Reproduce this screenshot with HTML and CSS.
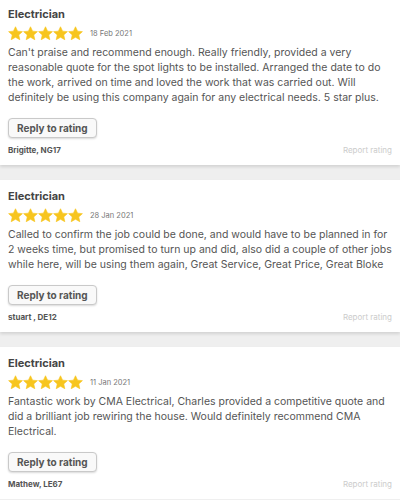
FILE: index.html
```html
<!DOCTYPE html>
<html>
	<head>
		<meta charset="UTF-8">
		<title>Ratings</title>
		<link rel="stylesheet" href="styles.css">
	</head>
	<body>
		<svg width="0" height="0" class="defs">
			<defs>
				<symbol id="star" viewBox="0 0 24 24">
					<path d="M12 1.2l3.3 7 7.7.8-5.8 5.2 1.7 7.7L12 18l-6.9 3.9 1.7-7.7L1 9l7.7-.8z" stroke-linejoin="round"/>
				</symbol>
			</defs>
		</svg>
		<div class="list">
			<div class="card">
				<h3 class="trade">Electrician</h3>
				<div class="rating">
					<span class="stars">
						<svg><use href="#star"/></svg><svg><use href="#star"/></svg><svg><use href="#star"/></svg><svg><use href="#star"/></svg><svg><use href="#star"/></svg>
					</span>
					<span class="date">18 Feb 2021</span>
				</div>
				<p class="text">Can't praise and recommend enough. Really friendly, provided a very reasonable quote for the spot lights to be installed. Arranged the date to do the work, arrived on time and loved the work that was carried out. Will definitely be using this company again for any electrical needs. 5 star plus.</p>
				<a href="javascript:;" class="reply">Reply to rating</a>
				<div class="foot">
					<span class="name">Brigitte, NG17</span>
					<a href="javascript:;" class="report">Report rating</a>
				</div>
			</div>
			<div class="card">
				<h3 class="trade">Electrician</h3>
				<div class="rating">
					<span class="stars">
						<svg><use href="#star"/></svg><svg><use href="#star"/></svg><svg><use href="#star"/></svg><svg><use href="#star"/></svg><svg><use href="#star"/></svg>
					</span>
					<span class="date">28 Jan 2021</span>
				</div>
				<p class="text">Called to confirm the job could be done, and would have to be planned in for 2 weeks time, but promised to turn up and did, also did a couple of other jobs while here, will be using them again, Great Service, Great Price, Great Bloke</p>
				<a href="javascript:;" class="reply">Reply to rating</a>
				<div class="foot">
					<span class="name">stuart , DE12</span>
					<a href="javascript:;" class="report">Report rating</a>
				</div>
			</div>
			<div class="card">
				<h3 class="trade">Electrician</h3>
				<div class="rating">
					<span class="stars">
						<svg><use href="#star"/></svg><svg><use href="#star"/></svg><svg><use href="#star"/></svg><svg><use href="#star"/></svg><svg><use href="#star"/></svg>
					</span>
					<span class="date">11 Jan 2021</span>
				</div>
				<p class="text">Fantastic work by CMA Electrical, Charles provided a competitive quote and did a brilliant job rewiring the house. Would definitely recommend CMA Electrical.</p>
				<a href="javascript:;" class="reply">Reply to rating</a>
				<div class="foot">
					<span class="name">Mathew, LE67</span>
					<a href="javascript:;" class="report">Report rating</a>
				</div>
			</div>
		</div>
	</body>
</html>
```

FILE: styles.css
```css
*{margin: 0;padding: 0;box-sizing: border-box;}
body{background: #efefef;font-family: Inter, "Open Sans", sans-serif;color: #555;}
.defs{position: absolute;}
.list{display: flex;flex-direction: column;gap: 15px;margin-top: -2px;}
.card{background: #fff;padding: 8px 8px 9px;box-shadow: 0 2px 3px rgba(0,0,0,0.12);}
.trade{font-size: 11px;line-height: 16px;font-weight: 700;color: #444;}
.rating{display: flex;align-items: center;height: 16px;margin-top: 3px;}
.stars{display: flex;gap: 0;}
.stars svg{width: 15px;height: 15px;fill: #f7c51e;stroke: #f7c51e;stroke-width: 1;}
.date{font-size: 7.5px;color: #777;margin-left: 7px;}
.text{font-size: 10.5px;line-height: 15px;color: #555;margin-top: 4px;}
.reply{display: inline-block;margin-top: 13px;height: 20px;line-height: 18px;padding: 0 8px;font-size: 10px;font-weight: 700;color: #555;text-decoration: none;border: 1px solid #c9c9c9;border-radius: 4px;background: #f9f9f9;box-shadow: 0 1px 2px rgba(0,0,0,0.15);}
.foot{display: flex;justify-content: space-between;align-items: center;margin-top: 6px;line-height: 12px;}
.name{font-size: 8px;font-weight: 700;color: #555;}
.report{font-size: 8px;color: #ccc;text-decoration: none;}
```
